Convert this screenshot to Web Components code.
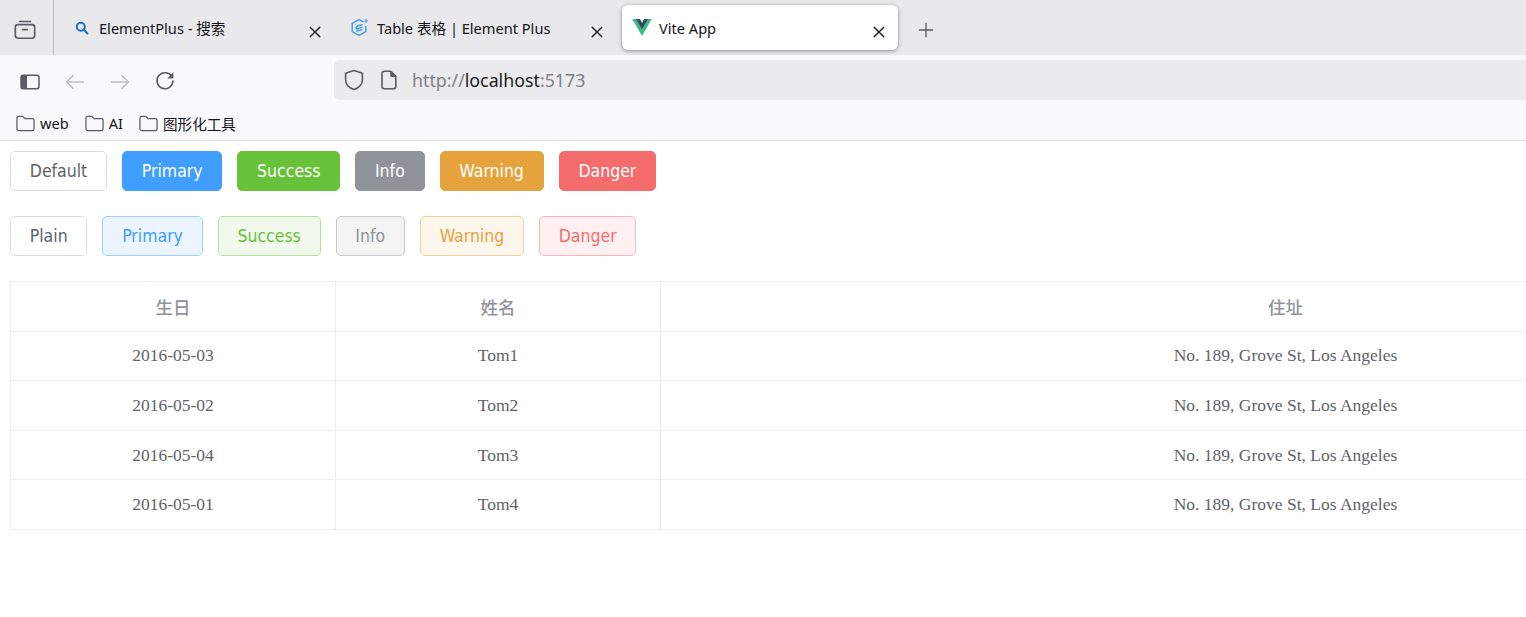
<!DOCTYPE html>
<html lang="zh">
<head>
<meta charset="utf-8">
<title>Vite App</title>
<style>
    html, body { margin: 0; height: 100%; background: #fff; overflow: hidden; }
</style>
</head>
<body>
<browser-window>
    <browser-tab slot="tabs" icon="search" label="ElementPlus - 搜索"></browser-tab>
    <browser-tab slot="tabs" icon="element" label="Table 表格 | Element Plus"></browser-tab>
    <browser-tab slot="tabs" icon="vue" label="Vite App" active></browser-tab>
    <bookmark-item slot="bookmarks" label="web"></bookmark-item>
    <bookmark-item slot="bookmarks" label="AI"></bookmark-item>
    <bookmark-item slot="bookmarks" label="图形化工具"></bookmark-item>

    <demo-page>
        <button-row>
            <el-button>Default</el-button>
            <el-button type="primary">Primary</el-button>
            <el-button type="success">Success</el-button>
            <el-button type="info">Info</el-button>
            <el-button type="warning">Warning</el-button>
            <el-button type="danger">Danger</el-button>
        </button-row>
        <button-row>
            <el-button plain>Plain</el-button>
            <el-button type="primary" plain>Primary</el-button>
            <el-button type="success" plain>Success</el-button>
            <el-button type="info" plain>Info</el-button>
            <el-button type="warning" plain>Warning</el-button>
            <el-button type="danger" plain>Danger</el-button>
        </button-row>
        <el-table></el-table>
    </demo-page>
</browser-window>

<script>
const UI_FONT = '"Noto Sans", "Noto Sans CJK SC", sans-serif';

const ICONS = {
    tabs: `<svg viewBox="0 0 20 20" fill="none" stroke="#5b5b66" stroke-width="1.5" stroke-linejoin="round" stroke-linecap="round"><path d="M5 3.2h10"/><rect x="1.2" y="6" width="17.6" height="12.4" rx="2.4"/><path d="M8 10.6h4"/></svg>`,
    search: `<svg viewBox="0 0 14 14" fill="none" stroke="#1a73c8" stroke-width="2" stroke-linecap="round"><circle cx="5.8" cy="5.8" r="4"/><path d="M8.8 8.8l3.7 3.7"/></svg>`,
    element: `<svg viewBox="0 0 18 20" fill="none" stroke="#409eff" stroke-linejoin="round" stroke-linecap="round"><path stroke-width="1.5" d="M11.8 3.6L8 1.6 1.2 5.4v8.2L8 17.4l6.8-3.8V8.4"/><path stroke-width="1.4" d="M5 10.6c0-2 1.6-3.4 3.4-3.4l2.8-.4M5.4 11l5.6-1.6M5.8 13l5.2-1.4"/><path stroke-width="1.1" d="M15 1.4v3.2M13.4 3h3.2"/></svg>`,
    vue: `<svg viewBox="0 0 261.76 226.69"><path fill="#41b883" d="M161.096.001l-30.225 52.351L100.647.001H-.005l130.877 226.688L261.749.001z"/><path fill="#34495e" d="M161.096.001l-30.225 52.351L100.647.001H52.346l78.526 136.01L209.398.001z"/></svg>`,
    close: `<svg viewBox="0 0 12 12" fill="none" stroke="#1c1b22" stroke-width="1.4" stroke-linecap="round"><path d="M1.2 1.2l9.6 9.6M10.8 1.2l-9.6 9.6"/></svg>`,
    plus: `<svg viewBox="0 0 16 16" fill="none" stroke="#5b5b66" stroke-width="1.3"><path d="M8 .8v14.4M.8 8h14.4"/></svg>`,
    sidebar: `<svg viewBox="0 0 20 16" fill="none"><rect x="1" y="1.2" width="18" height="13.6" rx="2.2" stroke="#5b5b66" stroke-width="1.5"/><path fill="#5b5b66" d="M1 3.4a2.2 2.2 0 0 1 2.2-2.2H7v13.6H3.2A2.2 2.2 0 0 1 1 12.6z"/></svg>`,
    back: `<svg viewBox="0 0 20 16" fill="none" stroke="#bdbdc3" stroke-width="1.5" stroke-linecap="round" stroke-linejoin="round"><path d="M18.4 8H1.6M8 1.6L1.6 8 8 14.4"/></svg>`,
    forward: `<svg viewBox="0 0 20 16" fill="none" stroke="#bdbdc3" stroke-width="1.5" stroke-linecap="round" stroke-linejoin="round"><path d="M1.6 8h16.8M12 1.6L18.4 8 12 14.4"/></svg>`,
    reload: `<svg viewBox="0 0 20 20" fill="none" stroke="#5b5b66" stroke-width="1.6" stroke-linecap="round"><path d="M16.6 5.2A8 8 0 1 0 18 10"/><path fill="#5b5b66" stroke="none" d="M18.4 1.2v6.2h-6.2z"/></svg>`,
    shield: `<svg viewBox="0 0 20 22" fill="none" stroke="#5b5b66" stroke-width="1.6" stroke-linejoin="round"><path d="M10 1.4l8.4 2.8v6.2c0 5-3.6 8.4-8.4 10.2-4.8-1.8-8.4-5.2-8.4-10.2V4.200z"/></svg>`,
    page: `<svg viewBox="0 0 16 20" fill="none" stroke="#5b5b66" stroke-width="1.6" stroke-linejoin="round"><path d="M3.2 1.200h6.600l5 5.200v10.200a2.200 2.200 0 0 1-2.200 2.200H3.200A2.200 2.200 0 0 1 1 16.600V3.400a2.200 2.200 0 0 1 2.200-2.200z"/><path fill="#5b5b66" stroke-width="1" d="M9.800 1.200v5.200h5z"/></svg>`,
    folder: `<svg viewBox="0 0 20 17" fill="none" stroke="#5b5b66" stroke-width="1.3" stroke-linejoin="round"><path d="M1 3a2 2 0 0 1 2-2h3.600c.8 0 1.200.4 1.700 1L9.400 3.400H17a2 2 0 0 1 2 2V14a2 2 0 0 1-2 2H3a2 2 0 0 1-2-2z"/></svg>`
};

class BrowserWindow extends HTMLElement {
    connectedCallback() {
        this.attachShadow({ mode: 'open' });
        this.shadowRoot.innerHTML = `
            <style>
                :host { display: flex; flex-direction: column; height: 100%; font-family: ${UI_FONT}; }
                .tabbar { display: flex; align-items: flex-start; height: 55px; background: #e9e9eb; flex: none; }
                .tabs-btn { display: flex; align-items: center; justify-content: center; width: 53px; height: 55px;
                    border-right: 1px solid #b8b8bb; flex: none; }
                .tabs-btn span { width: 22px; height: 22px; display: block; margin: 2px 3px 0 0; }
                .tab-list { display: flex; padding-top: 5px; }
                .new-tab { width: 16px; height: 16px; margin: 21px 0 0 20px; }
                .toolbar { display: flex; align-items: center; height: 51px; background: #f9f9fb; flex: none; }
                .tool { display: block; flex: none; }
                .sidebar { width: 20px; height: 16px; margin-left: 20px; }
                .back { width: 20px; height: 16px; margin-left: 25px; }
                .forward { width: 20px; height: 16px; margin-left: 25px; }
                .reload { width: 20px; height: 20px; margin-left: 25px; }
                .urlbar { display: flex; align-items: center; flex: 1; height: 40px; margin: 0 0 1px 159px;
                    background: #ebebed; border-radius: 6px 0 0 6px; font-size: 17.8px; color: #1c1b22; }
                .shield { width: 20px; height: 22px; margin-left: 10px; }
                .page { width: 16px; height: 20px; margin-left: 17px; }
                .url { margin-left: 15px; color: #7f7f86; }
                .url b { font-weight: 400; color: #1c1b22; }
                .bookmarks { display: flex; align-items: center; gap: 16px; height: 34px; padding-left: 16px;
                    background: #f9f9fb; border-bottom: 1px solid #dcdcdf; flex: none; }
                .content { flex: 1; min-height: 0; overflow: hidden; }
            </style>
            <div class="tabbar">
                <div class="tabs-btn"><span>${ICONS.tabs}</span></div>
                <div class="tab-list"><slot name="tabs"></slot></div>
                <span class="tool new-tab">${ICONS.plus}</span>
            </div>
            <div class="toolbar">
                <span class="tool sidebar">${ICONS.sidebar}</span>
                <span class="tool back">${ICONS.back}</span>
                <span class="tool forward">${ICONS.forward}</span>
                <span class="tool reload">${ICONS.reload}</span>
                <div class="urlbar">
                    <span class="tool shield">${ICONS.shield}</span>
                    <span class="tool page">${ICONS.page}</span>
                    <span class="url">http://<b>localhost</b>:5173</span>
                </div>
            </div>
            <div class="bookmarks"><slot name="bookmarks"></slot></div>
            <div class="content"><slot></slot></div>
        `;
    }
}

class BrowserTab extends HTMLElement {
    connectedCallback() {
        this.attachShadow({ mode: 'open' });
        const active = this.hasAttribute('active');
        this.shadowRoot.innerHTML = `
            <style>
                :host { display: inline-flex; align-items: center; width: 276px; height: 45px; margin-left: 6px;
                    padding-left: 10px; box-sizing: border-box; border-radius: 6px; font-size: 14.6px; color: #15141a;
                    vertical-align: top; }
                :host([active]) { background: #fff; box-shadow: 0 1px 4px rgba(0,0,0,.4); }
                :host(:first-child) { margin-left: 0; width: 280px; padding-left: 18px; }
                .icon { width: 20px; height: 20px; flex: none; display: flex; align-items: center; justify-content: center; }
                .icon svg { display: block; }
                .label { margin-left: 7px; flex: 1; white-space: nowrap; }
                .close { width: 12px; height: 12px; margin-right: 13px; flex: none; }
            </style>
            <span class="icon">${ICONS[this.getAttribute('icon')]}</span>
            <span class="label">${this.getAttribute('label')}</span>
            <span class="close">${ICONS.close}</span>
        `;
        const size = { search: [14, 14], element: [18, 20], vue: [20, 17] }[this.getAttribute('icon')];
        const svg = this.shadowRoot.querySelector('.icon svg');
        svg.setAttribute('width', size[0]);
        svg.setAttribute('height', size[1]);
    }
}

class BookmarkItem extends HTMLElement {
    connectedCallback() {
        this.attachShadow({ mode: 'open' });
        this.shadowRoot.innerHTML = `
            <style>
                :host { display: inline-flex; align-items: center; gap: 5px; font-size: 14.6px; color: #15141a; }
                svg { display: block; width: 19px; height: 17px; }
            </style>
            ${ICONS.folder}<span>${this.getAttribute('label')}</span>
        `;
    }
}

class DemoPage extends HTMLElement {
    connectedCallback() {
        this.attachShadow({ mode: 'open' });
        this.shadowRoot.innerHTML = `
            <style>
                :host { display: flex; flex-direction: column; gap: 25px; padding: 10px 0 0 10px; width: 1900px; }
            </style>
            <slot></slot>
        `;
    }
}

class ButtonRow extends HTMLElement {
    connectedCallback() {
        this.attachShadow({ mode: 'open' });
        this.shadowRoot.innerHTML = `
            <style>
                :host { display: flex; gap: 15px; }
            </style>
            <slot></slot>
        `;
    }
}

const BUTTON_COLORS = {
    primary: ['#409eff', '#ecf5ff', '#a0cfff'],
    success: ['#67c23a', '#f0f9eb', '#b3e19d'],
    info: ['#909399', '#f4f4f5', '#c8c9cc'],
    warning: ['#e6a23c', '#fdf6ec', '#f3d19e'],
    danger: ['#f56c6c', '#fef0f0', '#fab6b6']
};

class ElButton extends HTMLElement {
    connectedCallback() {
        this.attachShadow({ mode: 'open' });
        const colors = BUTTON_COLORS[this.getAttribute('type')];
        const plain = this.hasAttribute('plain');
        let look = 'color: #606266; background: #fff; border-color: #dcdfe6;';
        if (colors && plain) look = `color: ${colors[0]}; background: ${colors[1]}; border-color: ${colors[2]};`;
        if (colors && !plain) look = `color: #fff; background: ${colors[0]}; border-color: ${colors[0]};`;
        this.shadowRoot.innerHTML = `
            <style>
                :host { display: inline-flex; flex: none; }
                button { height: 40px; padding: 0 18.75px; box-sizing: border-box; border: 1px solid; border-radius: 5px;
                    font: 17.5px "DejaVu Sans Condensed", "DejaVu Sans", sans-serif; font-stretch: condensed; ${look} }
            </style>
            <button><slot></slot></button>
        `;
    }
}

class ElTable extends HTMLElement {
    constructor() {
        super();
        this.rows = [
            ['2016-05-03', 'Tom1', 'No. 189, Grove St, Los Angeles'],
            ['2016-05-02', 'Tom2', 'No. 189, Grove St, Los Angeles'],
            ['2016-05-04', 'Tom3', 'No. 189, Grove St, Los Angeles'],
            ['2016-05-01', 'Tom4', 'No. 189, Grove St, Los Angeles']
        ];
    }

    connectedCallback() {
        this.attachShadow({ mode: 'open' });
        const cell = (text, cls) => `<div class="cell ${cls}">${text}</div>`;
        this.shadowRoot.innerHTML = `
            <style>
                :host { display: grid; grid-template-columns: 325px 325px 1250px; grid-auto-rows: 49.6px;
                    border-top: 1px solid #ebeef5; border-left: 1px solid #ebeef5;
                    font: 17.5px "Liberation Serif", "Noto Sans CJK SC", serif; color: #606266; }
                .cell { display: flex; align-items: center; justify-content: center; box-sizing: border-box;
                    border-right: 1px solid #ebeef5; border-bottom: 1px solid #ebeef5; }
                .head { color: #909399; font-weight: 500; }
            </style>
            ${['生日', '姓名', '住址'].map(t => cell(t, 'head')).join('')}
            ${this.rows.map(r => r.map(t => cell(t, '')).join('')).join('')}
        `;
    }
}

customElements.define('browser-window', BrowserWindow);
customElements.define('browser-tab', BrowserTab);
customElements.define('bookmark-item', BookmarkItem);
customElements.define('demo-page', DemoPage);
customElements.define('button-row', ButtonRow);
customElements.define('el-button', ElButton);
customElements.define('el-table', ElTable);
</script>
</body>
</html>
